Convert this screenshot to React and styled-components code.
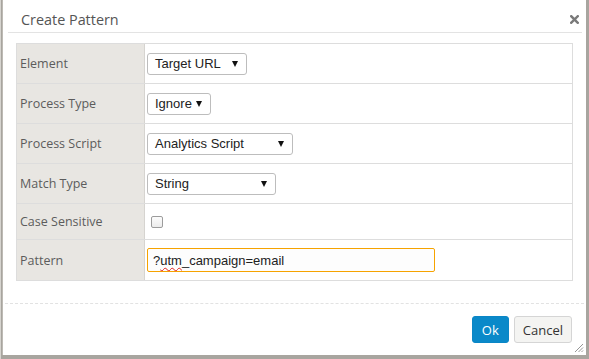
import styled, { createGlobalStyle } from "styled-components";

const GlobalStyle = createGlobalStyle`
  html, body {
    margin: 0;
    padding: 0;
    background: #a8a59f;
  }
  body {
    font-family: "Open Sans", "Liberation Sans", sans-serif;
  }
`;

const rows = [
  { label: "Element", kind: "select", value: "Target URL", width: 100, h: 40 },
  { label: "Process Type", kind: "select", value: "Ignore", width: 64, h: 40 },
  { label: "Process Script", kind: "select", value: "Analytics Script", width: 146, h: 40 },
  { label: "Match Type", kind: "select", value: "String", width: 129, h: 40 },
  { label: "Case Sensitive", kind: "check", h: 36 },
  { label: "Pattern", kind: "input", h: 41 },
];

const App = () => {
  return (
    <Page>
      <GlobalStyle />
      <Dialog>
        <Header>
          <Title>Create Pattern</Title>
          <Close aria-label="close">
            <svg width="9" height="9" viewBox="0 0 9 9">
              <path d="M1.2 1.2 L7.8 7.8 M7.8 1.2 L1.2 7.8" stroke="#7a7a7a" strokeWidth="2.4" strokeLinecap="square" />
            </svg>
          </Close>
        </Header>
        <Body>
          <Table>
            {rows.map((row) => (
              <Row key={row.label} $h={row.h}>
                <Label>{row.label}</Label>
                <Value>
                  {row.kind === "select" && (
                    <Select $w={row.width}>
                      <span>{row.value}</span>
                      <Arrow />
                    </Select>
                  )}
                  {row.kind === "check" && <Checkbox />}
                  {row.kind === "input" && (
                    <TextInput>
                      ?<Misspelled>utm</Misspelled>_campaign=email
                    </TextInput>
                  )}
                </Value>
              </Row>
            ))}
          </Table>
        </Body>
        <Footer>
          <Button $primary>Ok</Button>
          <Button>Cancel</Button>
        </Footer>
        <Grip>
          <svg width="10" height="10" viewBox="0 0 10 10">
            <path d="M9 1 L1 9 M9 4.5 L4.5 9 M9 7.5 L7.5 9" stroke="#8a8a8a" strokeWidth="0.9" />
          </svg>
        </Grip>
      </Dialog>
    </Page>
  );
};

const Page = styled.div`
  width: 589px;
  height: 359px;
  box-sizing: border-box;
  padding: 0 3px 4px 1px;
  background: #a8a59f;
  border-left: 1px solid #d6d4cf;
`;

const Dialog = styled.div`
  position: relative;
  width: 584px;
  height: 355px;
  box-sizing: border-box;
  background: #ffffff;
  border-left: 1px solid #bdbab4;
  display: flex;
  flex-direction: column;
`;

const Header = styled.div`
  margin: 0 4px 0 5px;
  height: 33px;
  box-sizing: border-box;
  padding: 6px 0 0 13px;
  border-bottom: 1px solid #e3e3e3;
  display: flex;
  align-items: center;
  justify-content: space-between;
`;

const Title = styled.h3`
  margin: 0;
  font-size: 14.4px;
  font-weight: 400;
  color: #555555;
`;

const Close = styled.div`
  width: 9px;
  height: 9px;
  margin-right: 3px;
  display: flex;
`;

const Body = styled.div`
  padding: 10px 13px 0 13px;
`;

const Table = styled.div`
  border: 1px solid #dddddd;
  border-bottom: none;
  display: flex;
  flex-direction: column;
`;

const Row = styled.div`
  display: grid;
  grid-template-columns: 128px 1fr;
  height: ${(p) => p.$h}px;
  box-sizing: border-box;
  border-bottom: 1px solid #dddddd;
`;

const Label = styled.div`
  background: #e8e6e2;
  border-right: 1px solid #d6d4d0;
  display: flex;
  align-items: center;
  padding-left: 3px;
  font-size: 12.5px;
  color: #5c5c5c;
`;

const Value = styled.div`
  display: flex;
  align-items: center;
  padding-left: 2px;
`;

const Select = styled.div`
  width: ${(p) => p.$w}px;
  height: 22px;
  box-sizing: border-box;
  border: 1px solid #bdbdbd;
  border-radius: 3px;
  background: #ffffff;
  display: flex;
  align-items: center;
  justify-content: space-between;
  padding: 0 8px 0 7px;
  font-family: "Liberation Sans", Arial, sans-serif;
  font-size: 13px;
  color: #222222;
`;

const Arrow = styled.span`
  width: 0;
  height: 0;
  border-left: 3.5px solid transparent;
  border-right: 3.5px solid transparent;
  border-top: 6px solid #111111;
`;

const Checkbox = styled.div`
  width: 12px;
  height: 12px;
  box-sizing: border-box;
  margin-left: 4px;
  border: 1px solid #9c9c9c;
  border-radius: 2px;
  background: linear-gradient(#fcfcfc, #ececec);
`;

const TextInput = styled.div`
  width: 288px;
  height: 24px;
  box-sizing: border-box;
  border: 1.5px solid #f6a300;
  border-radius: 2px;
  background: #fdfdfd;
  display: flex;
  align-items: center;
  padding-left: 5px;
  font-family: "Liberation Sans", Arial, sans-serif;
  font-size: 13px;
  color: #222222;
  white-space: pre;
`;

const Misspelled = styled.span`
  text-decoration: underline wavy #e02020;
  text-decoration-thickness: 1px;
  text-underline-offset: 2px;
`;

const Footer = styled.div`
  margin: 22px 2px 0 2px;
  border-top: 1px dashed #e2e2e2;
  padding: 12px 12px 0 0;
  display: flex;
  justify-content: flex-end;
  gap: 5px;
`;

const Button = styled.button`
  height: 27px;
  box-sizing: border-box;
  padding: 0 ${(p) => (p.$primary ? "9px" : "8px")};
  border-radius: 3px;
  border: 1px solid ${(p) => (p.$primary ? "#0a86c6" : "#d5d5d5")};
  background: ${(p) => (p.$primary ? "#0a89c9" : "#f4f4f2")};
  color: ${(p) => (p.$primary ? "#ffffff" : "#333333")};
  font-family: "Open Sans", "Liberation Sans", sans-serif;
  font-size: 13px;
  cursor: pointer;
`;

const Grip = styled.div`
  position: absolute;
  right: 2px;
  bottom: 2px;
  width: 10px;
  height: 10px;
  display: flex;
`;

export default App;
